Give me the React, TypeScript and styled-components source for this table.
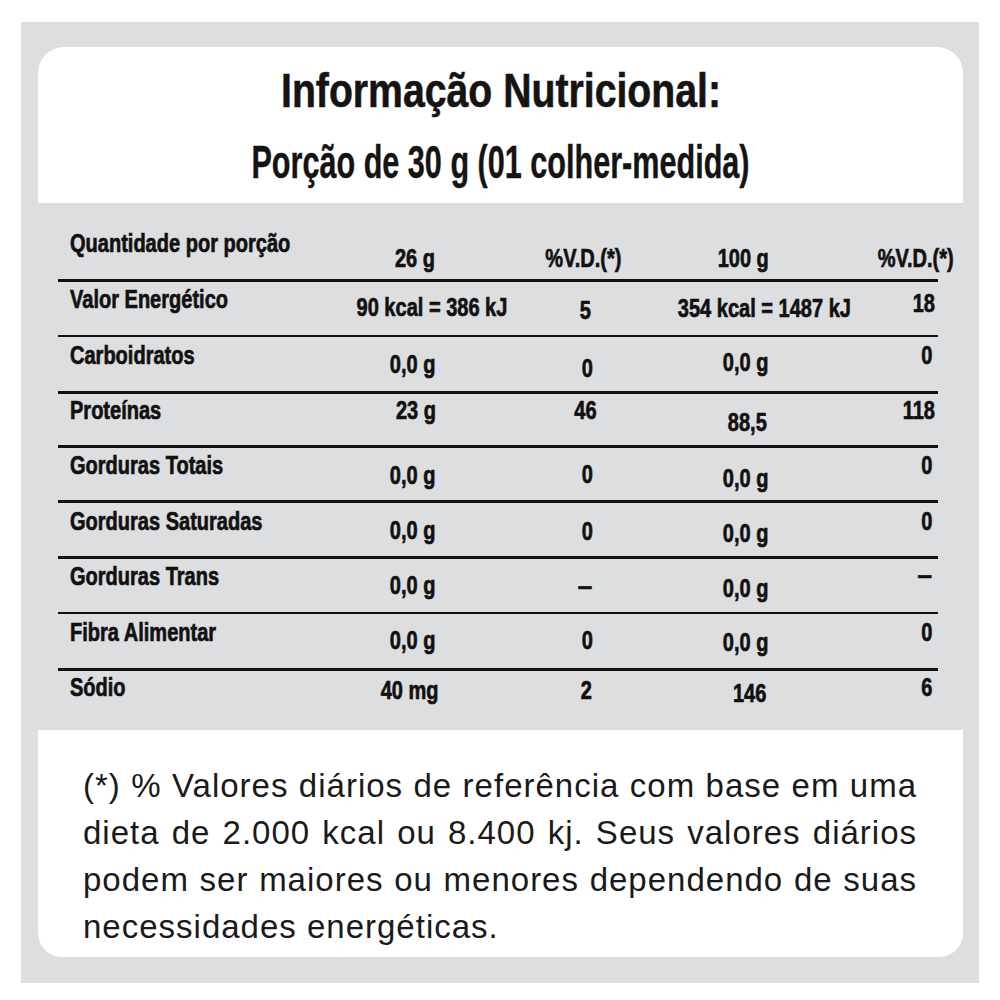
import React from "react";
import styled, { createGlobalStyle } from "styled-components";

const Global = createGlobalStyle`
  html, body { margin: 0; padding: 0; background: #ffffff; }
  body { width: 1000px; height: 1000px; overflow: hidden; }
`;

const SANS = `"Liberation Sans", Arial, sans-serif`;

const Panel = styled.div`
  box-sizing: border-box;
  margin: 22px 0 0 21px;
  width: 958px;
  height: 961px;
  background: #dddee0;
  padding: 25px 16px 26px 17px;
`;

const Card = styled.div`
  display: flex;
  flex-direction: column;
  height: 910px;
  color: #141414;
`;

const Header = styled.header`
  box-sizing: border-box;
  height: 156px;
  background: #ffffff;
  border-radius: 26px 26px 0 0;
  padding-top: 15px;
  display: flex;
  flex-direction: column;
  align-items: center;
`;

const Title = styled.h1`
  margin: 0;
  font-family: ${SANS};
  font-weight: 700;
  font-size: 49px;
  line-height: 56px;
  white-space: nowrap;
  transform: scaleX(0.8);
  -webkit-text-stroke: 0.6px #141414;
`;

const Subtitle = styled.h2`
  margin: 19px 0 0;
  font-family: ${SANS};
  font-weight: 700;
  font-size: 46px;
  line-height: 50px;
  white-space: nowrap;
  transform: scaleX(0.665);
  -webkit-text-stroke: 0.4px #141414;
`;

const Table = styled.section`
  box-sizing: border-box;
  height: 527px;
  padding: 0 25px 0 20px;
`;

const Row = styled.div<{ $h: number; $b: number }>`
  box-sizing: border-box;
  display: grid;
  grid-template-columns: 282px 146px 198px 124px 130px;
  align-items: start;
  height: ${(p) => p.$h}px;
  border-top: ${(p) => p.$b}px solid #121212;
`;

type Align = "start" | "center" | "end";

const Cell = styled.div<{ $top: number; $align: Align }>`
  display: flex;
  justify-content: ${(p) => (p.$align === "start" ? "flex-start" : p.$align === "end" ? "flex-end" : "center")};
  padding-top: ${(p) => p.$top}px;
  padding-left: ${(p) => (p.$align === "start" ? 12 : 0)}px;
  padding-right: ${(p) => (p.$align === "end" ? 3 : 0)}px;
  min-width: 0;
`;

const Value = styled.span<{ $shift: number; $align: Align; $sx: number }>`
  display: inline-block;
  font-family: ${SANS};
  font-weight: 700;
  font-size: 26px;
  line-height: 26px;
  white-space: nowrap;
  flex-shrink: 0;
  color: #111111;
  -webkit-text-stroke: 0.7px #111111;
  margin-left: ${(p) => (p.$align === "center" ? p.$shift * 2 : 0)}px;
  margin-right: ${(p) => (p.$align === "end" ? -p.$shift : 0)}px;
  transform: scaleX(${(p) => p.$sx});
  transform-origin: ${(p) => (p.$align === "start" ? "left" : p.$align === "end" ? "right" : "center")} center;
`;

const Footnote = styled.footer`
  flex: 1;
  background: #ffffff;
  border-radius: 0 0 24px 24px;
  padding: 32px 46px 0 45px;
`;

const NoteLine = styled.p<{ $last?: boolean }>`
  margin: 0;
  font-family: ${SANS};
  font-size: 33px;
  line-height: 47px;
  letter-spacing: 1px;
  white-space: nowrap;
  color: #1a1a1a;
  text-align: ${(p) => (p.$last ? "left" : "justify")};
  text-align-last: ${(p) => (p.$last ? "left" : "justify")};
`;

type C = { t: string; y: number; dx?: number };
type R = { h: number; b: number; label: C; cells: C[] };

const ALIGNS: Align[] = ["center", "center", "center", "end"];
const SX = 0.77;

const rows: R[] = [
  {
    h: 76,
    b: 0,
    label: { t: "Quantidade por porção", y: 27 },
    cells: [
      { t: "26 g", y: 42, dx: 2 },
      { t: "%V.D.(*)", y: 42, dx: -2 },
      { t: "100 g", y: 42, dx: -3 },
      { t: "%V.D.(*)", y: 42, dx: 19 },
    ],
  },
  {
    h: 56,
    b: 3,
    label: { t: "Valor Energético", y: 7 },
    cells: [
      { t: "90 kcal = 386 kJ", y: 15, dx: 19 },
      { t: "5", y: 18 },
      { t: "354 kcal = 1487 kJ", y: 16, dx: 18 },
      { t: "18", y: 11 },
    ],
  },
  {
    h: 56,
    b: 2,
    label: { t: "Carboidratos", y: 7 },
    cells: [
      { t: "0,0 g", y: 16 },
      { t: "0", y: 20, dx: 2 },
      { t: "0,0 g", y: 14 },
      { t: "0", y: 7, dx: -3 },
    ],
  },
  {
    h: 54,
    b: 3,
    label: { t: "Proteínas", y: 6 },
    cells: [
      { t: "23 g", y: 6, dx: 3 },
      { t: "46", y: 6 },
      { t: "88,5", y: 18, dx: 1 },
      { t: "118", y: 6 },
    ],
  },
  {
    h: 55,
    b: 3,
    label: { t: "Gorduras Totais", y: 7 },
    cells: [
      { t: "0,0 g", y: 17 },
      { t: "0", y: 16, dx: 2 },
      { t: "0,0 g", y: 20 },
      { t: "0", y: 7, dx: -3 },
    ],
  },
  {
    h: 56,
    b: 3,
    label: { t: "Gorduras Saturadas", y: 8 },
    cells: [
      { t: "0,0 g", y: 17 },
      { t: "0", y: 18, dx: 2 },
      { t: "0,0 g", y: 20 },
      { t: "0", y: 8, dx: -3 },
    ],
  },
  {
    h: 56,
    b: 3,
    label: { t: "Gorduras Trans", y: 7 },
    cells: [
      { t: "0,0 g", y: 16 },
      { t: "–", y: 17 },
      { t: "0,0 g", y: 19 },
      { t: "–", y: 6, dx: -3 },
    ],
  },
  {
    h: 56,
    b: 2,
    label: { t: "Fibra Alimentar", y: 7 },
    cells: [
      { t: "0,0 g", y: 15 },
      { t: "0", y: 15, dx: 2 },
      { t: "0,0 g", y: 17 },
      { t: "0", y: 7, dx: -3 },
    ],
  },
  {
    h: 62,
    b: 3,
    label: { t: "Sódio", y: 6 },
    cells: [
      { t: "40 mg", y: 9, dx: -3 },
      { t: "2", y: 9, dx: 1 },
      { t: "146", y: 12, dx: 4 },
      { t: "6", y: 6, dx: -3 },
    ],
  },
];

export default function App() {
  return (
    <>
      <Global />
      <Panel>
        <Card>
          <Header>
            <Title>Informação Nutricional:</Title>
            <Subtitle>Porção de 30 g (01 colher-medida)</Subtitle>
          </Header>
          <Table>
            {rows.map((r, i) => (
              <Row key={i} $h={r.h} $b={r.b}>
                <Cell $top={r.label.y - r.b} $align="start">
                  <Value $shift={0} $align="start" $sx={SX}>
                    {r.label.t}
                  </Value>
                </Cell>
                {r.cells.map((c, j) => (
                  <Cell key={j} $top={c.y - r.b} $align={ALIGNS[j]}>
                    <Value $shift={c.dx ?? 0} $align={ALIGNS[j]} $sx={c.t === "–" ? 1 : SX}>
                      {c.t}
                    </Value>
                  </Cell>
                ))}
              </Row>
            ))}
          </Table>
          <Footnote>
            <NoteLine>(*) % Valores diários de referência com base em uma</NoteLine>
            <NoteLine>dieta de 2.000 kcal ou 8.400 kj. Seus valores diários</NoteLine>
            <NoteLine>podem ser maiores ou menores dependendo de suas</NoteLine>
            <NoteLine $last>necessidades energéticas.</NoteLine>
          </Footnote>
        </Card>
      </Panel>
    </>
  );
}
